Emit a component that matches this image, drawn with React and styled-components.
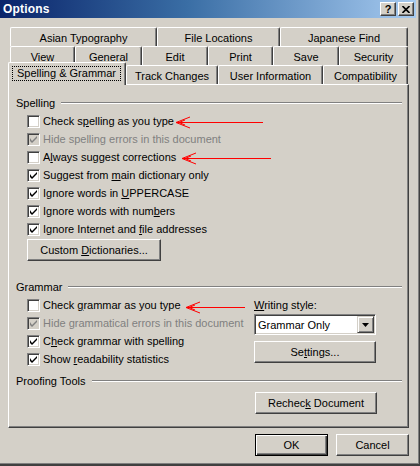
import React from "react";
import styled, { createGlobalStyle } from "styled-components";

const GlobalStyle = createGlobalStyle`
  html, body {
    margin: 0;
    padding: 0;
    background: #d4d0c8;
  }
  body {
    font-family: "Liberation Sans", Arial, sans-serif;
    font-size: 11px;
    color: #000;
  }
`;

const face = "#d4d0c8";
const shadow = "#808080";
const darkShadow = "#404040";

const Window = styled.div`
  position: relative;
  width: 420px;
  height: 466px;
  box-sizing: border-box;
  background: ${face};
  border-right: 1px solid ${darkShadow};
  border-bottom: 2px solid ${darkShadow};
  box-shadow: inset -1px -1px ${shadow};
  overflow: hidden;
`;

const TitleBar = styled.div`
  height: 18px;
  margin-right: 3px;
  display: flex;
  align-items: center;
  padding: 0 2px 0 3px;
  background: linear-gradient(90deg, #0a246a 0%, #3a6ea5 45%, #a6caf0 100%);
`;

const Title = styled.div`
  flex: 1;
  color: #fff;
  font-weight: bold;
  font-size: 12px;
  letter-spacing: 0.2px;
`;

const CaptionButton = styled.div`
  width: 16px;
  height: 14px;
  box-sizing: border-box;
  margin-left: ${({ $gap }) => $gap || 0}px;
  background: ${face};
  border: 1px solid;
  border-color: #fff ${darkShadow} ${darkShadow} #fff;
  box-shadow: inset -1px -1px ${shadow};
  display: flex;
  align-items: center;
  justify-content: center;
  font-weight: bold;
  font-size: 11px;
  line-height: 1;
`;

const Body = styled.div`
  padding: 9px 0 0 8px;
`;

const TabRow = styled.div`
  display: flex;
  height: 19px;
  margin-left: 2px;
`;

const Tab = styled.div`
  position: relative;
  width: ${({ $w }) => $w}px;
  height: ${({ $active }) => ($active ? 23 : 19)}px;
  margin: ${({ $active }) => ($active ? "-3px 0 0 -2px" : "0")};
  z-index: ${({ $active }) => ($active ? 2 : 0)};
  box-sizing: border-box;
  background: ${face};
  border-top: 1px solid #fff;
  border-left: 1px solid #fff;
  border-right: 1px solid ${darkShadow};
  box-shadow: inset -1px 0 ${shadow};
  border-radius: 2px 2px 0 0;
  text-align: center;
  padding-top: 3px;
  line-height: 14px;
  white-space: nowrap;
`;

const FocusLabel = styled.div`
  margin: 0 4px 0 3px;
  height: 15px;
  box-sizing: border-box;
  border: 1px dotted #000;
  line-height: 13px;
`;

const Panel = styled.div`
  position: relative;
  z-index: 1;
  width: 401px;
  height: 344px;
  box-sizing: border-box;
  border-top: 1px solid #fff;
  border-left: 1px solid #fff;
  border-right: 1px solid ${darkShadow};
  border-bottom: 1px solid ${darkShadow};
  box-shadow: inset -1px -1px ${shadow};
  padding: 9px 6px 0 7px;
`;

const GroupLabel = styled.div`
  display: flex;
  align-items: center;
  height: 18px;
  margin-top: ${({ $top }) => $top || 0}px;
  &::after {
    content: "";
    flex: 1;
    margin-left: 6px;
    border-top: 1px solid ${shadow};
    border-bottom: 1px solid #fff;
  }
`;

const Options = styled.div`
  margin-left: 11px;
`;

const CheckRow = styled.div`
  display: flex;
  align-items: center;
  height: 18px;
  gap: 3px;
  white-space: nowrap;
  color: ${({ $disabled }) => ($disabled ? shadow : "#000")};
`;

const Box = styled.div`
  width: 13px;
  height: 13px;
  box-sizing: border-box;
  border: 1px solid;
  border-color: ${shadow} #fff #fff ${shadow};
  box-shadow: inset 1px 1px ${darkShadow}, inset -1px -1px ${face};
  background: ${({ $disabled }) => ($disabled ? face : "#fff")};
  display: flex;
  align-items: center;
  justify-content: center;
`;

const Key = styled.span`
  text-decoration: underline;
  text-underline-offset: 1px;
`;

const Button = styled.div`
  width: ${({ $w }) => $w}px;
  height: 22px;
  box-sizing: border-box;
  margin-top: ${({ $top }) => $top || 0}px;
  background: ${face};
  border: 1px solid;
  border-color: ${({ $default }) =>
    $default ? "#000" : `#fff ${darkShadow} ${darkShadow} #fff`};
  box-shadow: ${({ $default }) =>
    $default
      ? `inset 1px 1px #fff, inset -1px -1px ${darkShadow}, inset -2px -2px ${shadow}`
      : `inset -1px -1px ${shadow}`};
  display: flex;
  align-items: center;
  justify-content: center;
  white-space: nowrap;
`;

const GrammarGrid = styled.div`
  display: grid;
  grid-template-columns: 227px 122px;
  margin-left: 11px;
`;

const SideColumn = styled.div`
  display: flex;
  flex-direction: column;
`;

const FieldLabel = styled.div`
  height: 18px;
  line-height: 18px;
`;

const Combo = styled.div`
  height: 21px;
  box-sizing: border-box;
  border: 1px solid;
  border-color: ${shadow} #fff #fff ${shadow};
  box-shadow: inset 1px 1px ${darkShadow}, inset -1px -1px ${face};
  background: #fff;
  display: flex;
  align-items: center;
  padding: 1px 1px 1px 3px;
`;

const ComboText = styled.div`
  flex: 1;
`;

const ComboArrow = styled.div`
  width: 17px;
  height: 17px;
  box-sizing: border-box;
  background: ${face};
  border: 1px solid;
  border-color: ${face} ${darkShadow} ${darkShadow} ${face};
  box-shadow: inset 1px 1px #fff, inset -1px -1px ${shadow};
  display: flex;
  align-items: center;
  justify-content: center;
`;

const ActionRow = styled.div`
  display: flex;
  margin: 2px 0 0 239px;
`;

const Footer = styled.div`
  width: 401px;
  display: flex;
  justify-content: flex-end;
  gap: 8px;
  margin-top: 6px;
`;

const Overlay = styled.svg`
  position: absolute;
  left: 0;
  top: 0;
  pointer-events: none;
`;

const Check = () => (
  <svg width="7" height="7" viewBox="0 0 7 7">
    <path d="M0 2 L0 5 L2 7 L7 2 L7 0 L2 5 Z" fill="currentColor" />
  </svg>
);

const CheckBox = ({ checked, disabled, children }) => (
  <CheckRow $disabled={disabled}>
    <Box $disabled={disabled}>{checked && <Check />}</Box>
    <span>{children}</span>
  </CheckRow>
);

const PushButton = ({ children, ...rest }) => (
  <Button {...rest}>
    <span>{children}</span>
  </Button>
);

const backRows = [
  [
    ["Asian Typography", 147],
    ["File Locations", 123],
    ["Japanese Find", 128],
  ],
  [
    ["View", 65],
    ["General", 67],
    ["Edit", 66],
    ["Print", 65],
    ["Save", 66],
    ["Security", 69],
  ],
];

const frontRow = [
  ["Spelling & Grammar", 118, true],
  ["Track Changes", 92],
  ["User Information", 105],
  ["Compatibility", 85],
];

// red annotation arrows: [tip x, y, tail x]
const arrows = [
  [176, 122, 263],
  [182, 158, 271],
  [186, 307, 245],
];

const Arrow = ({ x, y, end }) => (
  <g stroke="#ff0000" strokeWidth="1" fill="none">
    <line x1={x} y1={y + 0.5} x2={end} y2={y + 0.5} />
    <polyline points={`${x + 14},${y - 5} ${x},${y + 0.5} ${x + 14},${y + 6}`} />
    <polyline points={`${x + 9},${y - 2} ${x + 3},${y + 0.5} ${x + 9},${y + 3}`} />
  </g>
);

export default function App() {
  return (
    <Window>
      <GlobalStyle />
      <TitleBar>
        <Title>Options</Title>
        <CaptionButton>?</CaptionButton>
        <CaptionButton $gap={2}>
          <svg width="8" height="7" viewBox="0 0 8 7">
            <path d="M0.5 0 L7.5 7 M7.5 0 L0.5 7" stroke="#000" strokeWidth="1.6" />
          </svg>
        </CaptionButton>
      </TitleBar>
      <Body>
        {backRows.map((row, i) => (
          <TabRow key={i}>
            {row.map(([label, w]) => (
              <Tab key={label} $w={w}>
                {label}
              </Tab>
            ))}
          </TabRow>
        ))}
        <TabRow>
          {frontRow.map(([label, w, active]) => (
            <Tab key={label} $w={w} $active={active}>
              {active ? <FocusLabel>{label}</FocusLabel> : label}
            </Tab>
          ))}
        </TabRow>

        <Panel>
          <GroupLabel>Spelling</GroupLabel>
          <Options>
            <CheckBox>
              Check s<Key>p</Key>elling as you type
            </CheckBox>
            <CheckBox checked disabled>
              Hide spelling errors in this document
            </CheckBox>
            <CheckBox>
              A<Key>l</Key>ways suggest corrections
            </CheckBox>
            <CheckBox checked>
              Suggest from <Key>m</Key>ain dictionary only
            </CheckBox>
            <CheckBox checked>
              Ignore words in <Key>U</Key>PPERCASE
            </CheckBox>
            <CheckBox checked>
              Ignore words with num<Key>b</Key>ers
            </CheckBox>
            <CheckBox checked>
              Ignore Internet and <Key>f</Key>ile addresses
            </CheckBox>
            <PushButton $w={134} $top={1}>
              Custom <Key>D</Key>ictionaries...
            </PushButton>
          </Options>

          <GroupLabel $top={17}>Grammar</GroupLabel>
          <GrammarGrid>
            <div>
              <CheckBox>
                Check <Key>g</Key>rammar as you type
              </CheckBox>
              <CheckBox checked disabled>
                Hide grammatical errors in this document
              </CheckBox>
              <CheckBox checked>
                C<Key>h</Key>eck grammar with spelling
              </CheckBox>
              <CheckBox checked>
                Show <Key>r</Key>eadability statistics
              </CheckBox>
            </div>
            <SideColumn>
              <FieldLabel>
                <Key>W</Key>riting style:
              </FieldLabel>
              <Combo>
                <ComboText>Grammar Only</ComboText>
                <ComboArrow>
                  <svg width="7" height="4" viewBox="0 0 7 4">
                    <path d="M0 0 H7 L3.5 4 Z" fill="#000" />
                  </svg>
                </ComboArrow>
              </Combo>
              <PushButton $w={122} $top={6}>
                Se<Key>t</Key>tings...
              </PushButton>
            </SideColumn>
          </GrammarGrid>

          <GroupLabel $top={4}>Proofing Tools</GroupLabel>
          <ActionRow>
            <PushButton $w={122}>
              Rechec<Key>k</Key> Document
            </PushButton>
          </ActionRow>
        </Panel>

        <Footer>
          <PushButton $w={73} $default>
            OK
          </PushButton>
          <PushButton $w={73}>Cancel</PushButton>
        </Footer>
      </Body>
      <Overlay width="420" height="466">
        {arrows.map(([x, y, end]) => (
          <Arrow key={y} x={x} y={y} end={end} />
        ))}
      </Overlay>
    </Window>
  );
}
